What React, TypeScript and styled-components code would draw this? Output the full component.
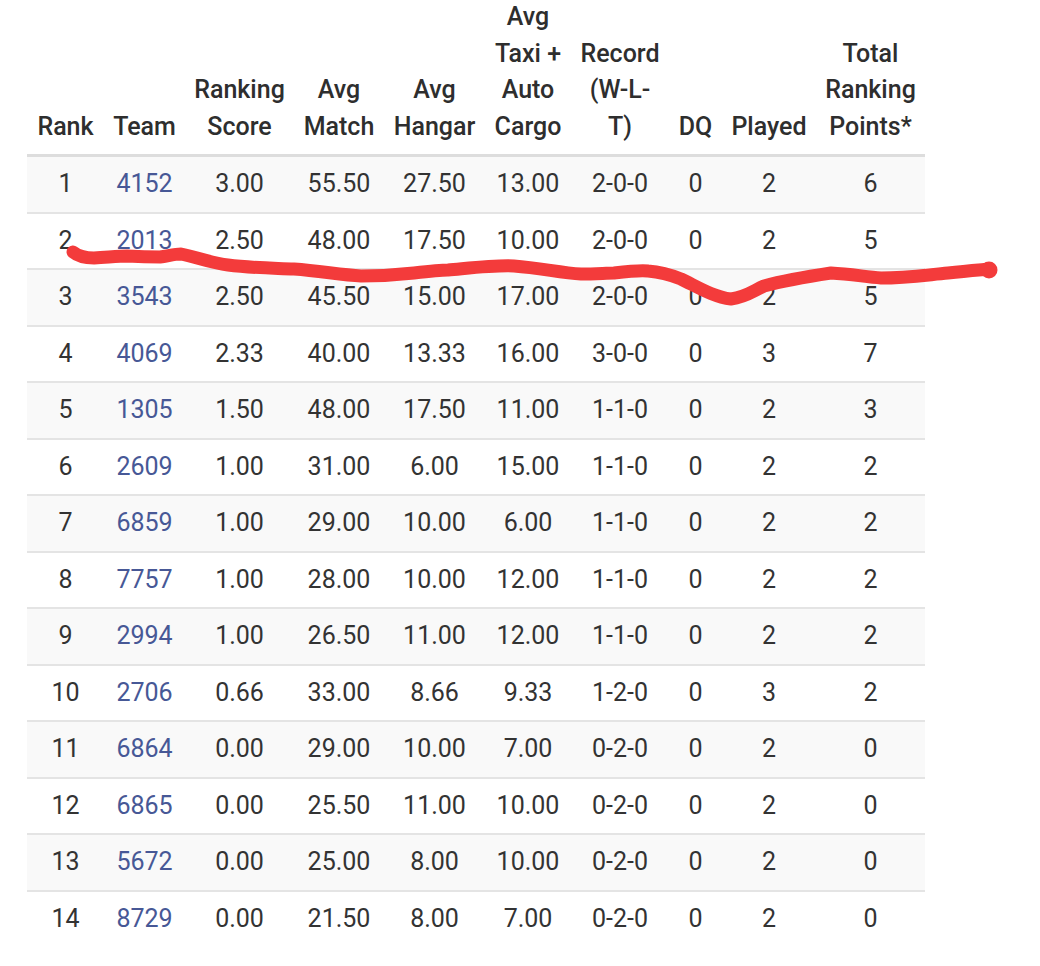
import React from "react";
import styled, { createGlobalStyle } from "styled-components";

const GlobalStyle = createGlobalStyle`
  html, body {
    margin: 0;
    padding: 0;
    background: #ffffff;
    font-family: Roboto, "Liberation Sans", Arial, sans-serif;
  }
`;

const Page = styled.div`
  position: relative;
  width: 1040px;
  height: 966px;
  overflow: hidden;
  padding-left: 27px;
  box-sizing: border-box;
`;

const Table = styled.table`
  margin-top: -1px;
  border-collapse: collapse;
  table-layout: fixed;
  width: 898px;
  font-size: 25px;
  line-height: 36.5px;
  color: #333333;
`;

const HeadCell = styled.th<{ $w: number }>`
  width: ${(p) => p.$w}px;
  padding: 0 0 9px;
  text-align: center;
  vertical-align: bottom;
  font-weight: 500;
  white-space: nowrap;
  color: #2e2e2e;
  border-bottom: 3px solid #dddddd;
`;

const Row = styled.tr<{ $striped: boolean; $last: boolean }>`
  background: ${(p) => (p.$striped ? "#f9f9f9" : "#ffffff")};
  border-bottom: ${(p) => (p.$last ? "none" : "2px solid #e4e4e4")};
`;

const Cell = styled.td`
  padding: 9px 0;
  text-align: center;
  white-space: nowrap;
`;

const TeamLink = styled.a`
  color: #475896;
  text-decoration: none;
`;

const Scribble = styled.svg`
  position: absolute;
  left: 0;
  top: 0;
  pointer-events: none;
`;

const columns: { label: React.ReactNode; w: number }[] = [
  { label: "Rank", w: 77 },
  { label: "Team", w: 81 },
  { label: <>Ranking<br />Score</>, w: 109 },
  { label: <>Avg<br />Match</>, w: 90 },
  { label: <>Avg<br />Hangar</>, w: 101 },
  { label: <>Avg<br />Taxi +<br />Auto<br />Cargo</>, w: 86 },
  { label: <>Record<br />(W-L-<br />T)</>, w: 98 },
  { label: "DQ", w: 53 },
  { label: "Played", w: 94 },
  { label: <>Total<br />Ranking<br />Points*</>, w: 109 },
];

const rows: string[][] = [
  ["1", "4152", "3.00", "55.50", "27.50", "13.00", "2-0-0", "0", "2", "6"],
  ["2", "2013", "2.50", "48.00", "17.50", "10.00", "2-0-0", "0", "2", "5"],
  ["3", "3543", "2.50", "45.50", "15.00", "17.00", "2-0-0", "0", "2", "5"],
  ["4", "4069", "2.33", "40.00", "13.33", "16.00", "3-0-0", "0", "3", "7"],
  ["5", "1305", "1.50", "48.00", "17.50", "11.00", "1-1-0", "0", "2", "3"],
  ["6", "2609", "1.00", "31.00", "6.00", "15.00", "1-1-0", "0", "2", "2"],
  ["7", "6859", "1.00", "29.00", "10.00", "6.00", "1-1-0", "0", "2", "2"],
  ["8", "7757", "1.00", "28.00", "10.00", "12.00", "1-1-0", "0", "2", "2"],
  ["9", "2994", "1.00", "26.50", "11.00", "12.00", "1-1-0", "0", "2", "2"],
  ["10", "2706", "0.66", "33.00", "8.66", "9.33", "1-2-0", "0", "3", "2"],
  ["11", "6864", "0.00", "29.00", "10.00", "7.00", "0-2-0", "0", "2", "0"],
  ["12", "6865", "0.00", "25.50", "11.00", "10.00", "0-2-0", "0", "2", "0"],
  ["13", "5672", "0.00", "25.00", "8.00", "10.00", "0-2-0", "0", "2", "0"],
  ["14", "8729", "0.00", "21.50", "8.00", "7.00", "0-2-0", "0", "2", "0"],
];

export default function App() {
  return (
    <>
      <GlobalStyle />
      <Page>
        <Table>
          <thead>
            <tr>
              {columns.map((c, i) => (
                <HeadCell key={i} $w={c.w}>
                  {c.label}
                </HeadCell>
              ))}
            </tr>
          </thead>
          <tbody>
            {rows.map((r, i) => (
              <Row key={i} $striped={i % 2 === 0} $last={i === rows.length - 1}>
                {r.map((v, j) => (
                  <Cell key={j}>
                    {j === 1 ? <TeamLink href="#">{v}</TeamLink> : v}
                  </Cell>
                ))}
              </Row>
            ))}
          </tbody>
        </Table>
        <Scribble width="1040" height="966" viewBox="0 0 1040 966">
          <path
            d="M73 252 C79 257 87 258 94 258 C110 257 120 256 127 256 C145 257 150 257 160 257 C168 256 174 254 181 254 C196 257 211 263 228 265 C251 268 271 268 294 269 C321 271 341 275 361 276 C381 276 396 275 414 273 C431 271 441 270 448 270 C471 268 496 265 514 266 C541 268 561 273 581 274 C596 274 606 273 614 273 C631 271 641 270 648 271 C661 272 671 275 681 279 C696 286 713 297 731 299 C746 297 753 291 764 286 C786 280 811 276 831 273 C851 274 866 277 881 278 C906 278 926 275 948 273 C966 271 979 270 990 269"
            fill="none"
            stroke="#f33b3b"
            strokeWidth="13"
            strokeLinecap="round"
            strokeLinejoin="round"
          />
          <circle cx="989" cy="270" r="8.5" fill="#f33b3b" />
        </Scribble>
      </Page>
    </>
  );
}
